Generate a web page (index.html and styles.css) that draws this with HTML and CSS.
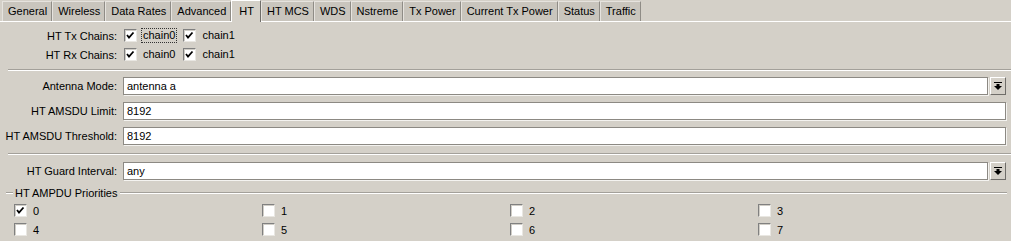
FILE: index.html
```html
<!DOCTYPE html>
<html lang="en">
<head>
    <meta charset="UTF-8">
    <title>Wireless - HT</title>
    <link rel="stylesheet" href="styles.css">
</head>
<body>
    <div class="tabs">
        <div class="tab">General</div>
        <div class="tab">Wireless</div>
        <div class="tab">Data Rates</div>
        <div class="tab">Advanced</div>
        <div class="tab active">HT</div>
        <div class="tab">HT MCS</div>
        <div class="tab">WDS</div>
        <div class="tab">Nstreme</div>
        <div class="tab">Tx Power</div>
        <div class="tab">Current Tx Power</div>
        <div class="tab">Status</div>
        <div class="tab">Traffic</div>
    </div>

    <div class="panel">
        <div class="chains">
            <div class="chain-row">
                <div class="label">HT Tx Chains:</div>
                <div class="opts">
                    <span class="box checked"></span><span class="opt focus">chain0</span>
                    <span class="box checked"></span><span class="opt">chain1</span>
                </div>
            </div>
            <div class="chain-row">
                <div class="label">HT Rx Chains:</div>
                <div class="opts">
                    <span class="box checked"></span><span class="opt">chain0</span>
                    <span class="box checked"></span><span class="opt">chain1</span>
                </div>
            </div>
        </div>

        <div class="sep"></div>

        <div class="fields">
            <div class="field">
                <div class="label">Antenna Mode:</div>
                <div class="combo">
                    <div class="input">antenna a</div>
                    <div class="drop"></div>
                </div>
            </div>
            <div class="field">
                <div class="label">HT AMSDU Limit:</div>
                <div class="input">8192</div>
            </div>
            <div class="field">
                <div class="label">HT AMSDU Threshold:</div>
                <div class="input">8192</div>
            </div>
        </div>

        <div class="sep sep-low"></div>

        <div class="fields guard">
            <div class="field">
                <div class="label">HT Guard Interval:</div>
                <div class="combo">
                    <div class="input">any</div>
                    <div class="drop"></div>
                </div>
            </div>
        </div>

        <div class="group">
            <div class="legend">
                <span class="line short"></span>
                <span class="legend-text">HT AMPDU Priorities</span>
                <span class="line"></span>
            </div>
            <div class="prio">
                <div class="item"><span class="box checked"></span>0</div>
                <div class="item"><span class="box"></span>1</div>
                <div class="item"><span class="box"></span>2</div>
                <div class="item"><span class="box"></span>3</div>
                <div class="item"><span class="box"></span>4</div>
                <div class="item"><span class="box"></span>5</div>
                <div class="item"><span class="box"></span>6</div>
                <div class="item"><span class="box"></span>7</div>
            </div>
        </div>
    </div>
</body>
</html>
```

FILE: styles.css
```css
* {
    margin: 0;
    padding: 0;
    box-sizing: border-box;
}

body {
    font-family: 'Liberation Sans', Arial, sans-serif;
    font-size: 11px;
    color: #000;
    background: #d4d0c8;
    width: 1011px;
    height: 241px;
    overflow: hidden;
}

/* tab strip */
.tabs {
    display: flex;
    height: 22px;
    padding-left: 2px;
    border-bottom: 1px solid #fff;
    align-items: flex-end;
}

.tab {
    height: 20px;
    line-height: 18px;
    padding: 0 4px 0 5px;
    background: #c9c5bd;
    border-top: 1px solid #e6e3de;
    border-left: 1px solid #e6e3de;
    border-right: 1px solid #8f8c86;
    white-space: nowrap;
}

.tab.active {
    height: 22px;
    line-height: 20px;
    margin-bottom: -1px;
    background: #d4d0c8;
    border-top-color: #fff;
    border-left-color: #fff;
    border-right-color: #6f6d69;
    padding: 0 6px 0 7px;
}

.panel {
    padding-right: 5px;
}

/* chains */
.chains {
    padding-top: 4px;
}

.chain-row {
    display: flex;
    height: 19px;
    align-items: center;
}

.label {
    width: 117px;
    text-align: right;
    white-space: nowrap;
}

.opts {
    display: flex;
    align-items: center;
    margin-left: 7px;
}

.opt {
    padding: 0 1px;
    margin: 0 6px 0 4px;
    border: 1px solid transparent;
    line-height: 13px;
}

.opt.focus {
    border: 1px dotted #333;
}

.box {
    display: inline-block;
    width: 13px;
    height: 13px;
    background: #fff;
    border: 1px solid;
    border-color: #808080 #e9e7e2 #e9e7e2 #808080;
    box-shadow: inset 1px 1px 0 #d0cdc6;
    flex-shrink: 0;
}

.box.checked {
    background: #fff url("data:image/svg+xml;utf8,<svg xmlns='http://www.w3.org/2000/svg' width='11' height='11'><polyline points='2,5 4,7.5 8.5,2.5' fill='none' stroke='black' stroke-width='1.8'/></svg>") center no-repeat;
}

/* separators */
.sep {
    margin: 5px 0 0 8px;
    height: 2px;
    border-top: 1px solid #a3a09a;
    border-bottom: 1px solid #fff;
    margin-right: -5px;
}

.sep-low {
    margin-top: 8px;
}

/* fields */
.fields {
    display: flex;
    flex-direction: column;
    gap: 7px;
    padding-top: 6px;
}

.fields.guard {
    padding-top: 7px;
}

.field {
    display: grid;
    grid-template-columns: 117px 1fr;
    column-gap: 6px;
    align-items: center;
    height: 18px;
}

.input {
    height: 18px;
    line-height: 16px;
    padding-left: 3px;
    background: #fff;
    border: 1px solid #8c8983;
    box-shadow: 1px 1px 0 #f4f3f0;
}

.combo {
    display: flex;
    gap: 2px;
}

.combo .input {
    flex: 1;
}

.drop {
    width: 16px;
    height: 18px;
    border: 1px solid;
    border-color: #fff #6f6d69 #6f6d69 #fff;
    background: #d4d0c8 url("data:image/svg+xml;utf8,<svg xmlns='http://www.w3.org/2000/svg' width='14' height='16'><rect x='3' y='4' width='8' height='1' fill='black'/><rect x='5.5' y='6' width='3' height='2' fill='black'/><polygon points='3,8 11,8 7,12' fill='black'/></svg>") center no-repeat;
}

/* priorities group */
.group {
    padding-top: 6px;
}

.legend {
    display: flex;
    align-items: center;
    height: 13px;
}

.line {
    flex: 1;
    height: 2px;
    border-top: 1px solid #a3a09a;
    border-bottom: 1px solid #fff;
    margin-right: -1px;
}

.line.short {
    flex: none;
    width: 7px;
    margin-left: 6px;
}

.legend-text {
    padding: 0 3px;
}

.prio {
    display: grid;
    grid-template-columns: repeat(4, 248px);
    grid-auto-rows: 19px;
    padding: 5px 0 0 14px;
}

.item {
    display: flex;
    align-items: center;
    gap: 6px;
    height: 13px;
}
```
